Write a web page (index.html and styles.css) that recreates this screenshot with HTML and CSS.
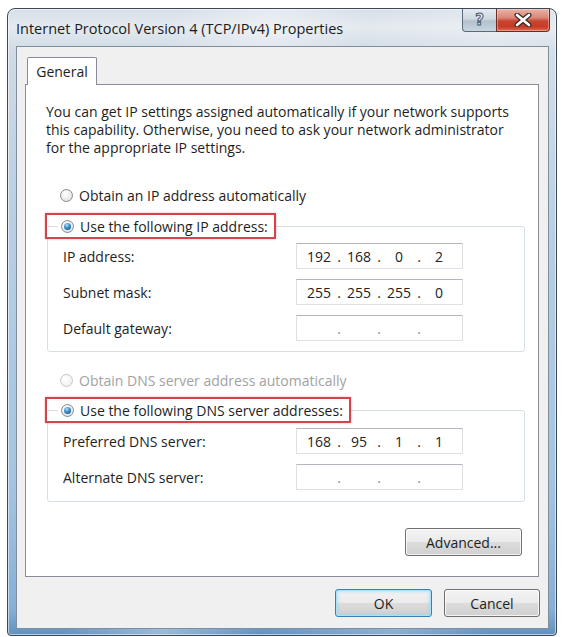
FILE: index.html
```html
<!DOCTYPE html>
<html lang="en">
<head>
<meta charset="utf-8">
<title>Internet Protocol Version 4 (TCP/IPv4) Properties</title>
<link rel="stylesheet" href="styles.css">
</head>
<body>
<div class="window">
  <div class="titlebar">
    <span class="title">Internet Protocol Version 4 (TCP/IPv4) Properties</span>
    <div class="caption-btns">
      <span class="cbtn help">?</span>
      <span class="cbtn close">
        <svg width="20" height="14" viewBox="0 0 20 14">
          <path d="M4 2 L16 12 M16 2 L4 12" stroke="#3a2a28" stroke-width="5" stroke-linecap="round"/>
          <path d="M4 2 L16 12 M16 2 L4 12" stroke="#ffffff" stroke-width="2.6" stroke-linecap="round"/>
        </svg>
      </span>
    </div>
  </div>
  <div class="client">
    <div class="tabs"><div class="tab">General</div></div>
    <div class="panel">
      <p class="intro">You can get IP settings assigned automatically if your network supports<br>this capability. Otherwise, you need to ask your network administrator<br>for the appropriate IP settings.</p>

      <div class="option"><span class="radio"></span>Obtain an IP address automatically</div>
      <div class="group group-ip">
        <div class="legend"><span class="radio on"></span>Use the following IP address:</div>
        <div class="fields">
          <span class="label">IP address:</span>
          <div class="ip"><span>192</span><i>.</i><span>168</span><i>.</i><span>0</span><i>.</i><span>2</span></div>
          <span class="label">Subnet mask:</span>
          <div class="ip"><span>255</span><i>.</i><span>255</span><i>.</i><span>255</span><i>.</i><span>0</span></div>
          <span class="label">Default gateway:</span>
          <div class="ip empty"><span></span><i>.</i><span></span><i>.</i><span></span><i>.</i><span></span></div>
        </div>
      </div>

      <div class="option disabled"><span class="radio"></span>Obtain DNS server address automatically</div>
      <div class="group group-dns">
        <div class="legend"><span class="radio on"></span>Use the following DNS server addresses:</div>
        <div class="fields">
          <span class="label">Preferred DNS server:</span>
          <div class="ip"><span>168</span><i>.</i><span>95</span><i>.</i><span>1</span><i>.</i><span>1</span></div>
          <span class="label">Alternate DNS server:</span>
          <div class="ip empty"><span></span><i>.</i><span></span><i>.</i><span></span><i>.</i><span></span></div>
        </div>
      </div>

      <button class="btn adv">Advanced...</button>
    </div>
    <div class="actions">
      <button class="btn ok">OK</button>
      <button class="btn cancel">Cancel</button>
    </div>
  </div>
</div>
</body>
</html>
```
FILE: styles.css
```css
* { box-sizing: border-box; }

html, body {
  margin: 0;
  padding: 0;
  background: #ffffff;
}

body {
  font-family: "Open Sans", "Noto Sans", "DejaVu Sans", sans-serif;
  font-size: 14px;
  color: #1e1e1e;
}

.window {
  margin: 8px 0 0 7px;
  width: 550px;
  height: 628px;
  border: 1px solid #3d4853;
  border-radius: 8px 8px 4px 4px;
  padding: 0 7px 6px 8px;
  display: flex;
  flex-direction: column;
  background:
    linear-gradient(100deg, rgba(255,255,255,0) 25%, rgba(255,255,255,.35) 40%, rgba(255,255,255,0) 55%, rgba(255,255,255,.25) 75%, rgba(255,255,255,0) 90%),
    linear-gradient(to bottom, #d6dfe8 0px, #e4eaef 18px, #d0dbe5 42px, #b9d0e4 200px, #a3c4e1 480px, #86b0d6 600px, #5f8fbe 628px);
  box-shadow: inset 0 0 0 1px rgba(255,255,255,.55);
}

.titlebar {
  height: 37px;
  display: flex;
  align-items: center;
  justify-content: space-between;
}

.title {
  font-size: 14.5px;
  color: #1b1b1b;
  margin-top: 1px;
}

.caption-btns {
  align-self: flex-start;
  display: flex;
  margin-right: -1px;
}

.cbtn {
  height: 23px;
  display: flex;
  align-items: center;
  justify-content: center;
  border: 1px solid #5d6b78;
  border-top: none;
}

.help {
  width: 34px;
  border-radius: 0 0 0 4px;
  border-right: none;
  background: linear-gradient(to bottom, #e4eaf0 0%, #cfd9e2 45%, #b3c1cd 55%, #c9d6e0 100%);
  font-family: "DejaVu Sans", sans-serif;
  font-weight: bold;
  font-size: 15px;
  color: #f4f6f8;
  -webkit-text-stroke: 1px #4a5560;
  padding-bottom: 1px;
}

.close {
  width: 54px;
  border-radius: 0 0 4px 0;
  border-color: #6d2a22;
  background: linear-gradient(to bottom, #eab2a8 0%, #db8676 40%, #c74631 55%, #c93a26 80%, #dc6a4e 100%);
  box-shadow: inset 0 0 0 1px rgba(255,255,255,.35);
}

.client {
  flex: 1;
  display: flex;
  flex-direction: column;
  background: #f0f0f0;
  border: 1px solid #7f8e9c;
  padding: 10px 9px 11px 8px;
}

.tabs {
  display: flex;
  padding-left: 2px;
}

.tab {
  position: relative;
  z-index: 1;
  width: 70px;
  height: 28px;
  margin-bottom: -1px;
  background: #ffffff;
  border: 1px solid #898c95;
  border-bottom: none;
  border-radius: 2px 2px 0 0;
  display: flex;
  align-items: center;
  justify-content: center;
  padding-bottom: 1px;
}

.panel {
  flex: 1;
  background: #ffffff;
  border: 1px solid #898c95;
  padding: 18px 13px 0 21px;
  display: flex;
  flex-direction: column;
}

.intro {
  margin: 0 0 0 -1px;
  line-height: 18px;
}

.option {
  display: flex;
  align-items: center;
  height: 18px;
  padding-left: 13px;
  margin-top: 29px;
}

.option.disabled {
  color: #a2a2a2;
  margin-top: 19px;
}

.radio {
  width: 13px;
  height: 13px;
  border-radius: 50%;
  border: 1px solid #8a8a8a;
  background: radial-gradient(circle at 40% 35%, #ffffff 0%, #f0f0f0 45%, #d4d4d4 100%);
  margin-right: 6px;
  flex: none;
  display: flex;
  align-items: center;
  justify-content: center;
}

.option.disabled .radio {
  border-color: #c6c6c6;
  background: radial-gradient(circle at 40% 35%, #ffffff, #ededed);
}

.radio.on::after {
  content: "";
  width: 7px;
  height: 7px;
  border-radius: 50%;
  background: radial-gradient(circle at 40% 30%, #a9e0fa 0%, #3b8ccc 45%, #0f3e6e 100%);
}

.group {
  border: 1px solid #d5dfe5;
  border-radius: 3px;
  display: flex;
  flex-direction: column;
  padding: 0 0 10px 15px;
}

.group-ip { margin-top: 22px; }
.group-dns { margin-top: 21px; padding-bottom: 11px; }

.legend {
  align-self: flex-start;
  display: flex;
  align-items: center;
  height: 26px;
  margin: -14px 0 0 -18px;
  border: 2px solid #d6434b;
  padding: 0 6px 0 14px;
  background:
    linear-gradient(#d5dfe5, #d5dfe5) no-repeat 1px 50% / 10px 1px,
    #ffffff;
  box-shadow: 0 0 2px rgba(214, 67, 75, .45);
}

.fields {
  margin-top: 4px;
  display: grid;
  grid-template-columns: 233px 167px;
  row-gap: 10px;
  align-items: center;
}

.group-dns .fields { margin-top: 5px; }

.ip {
  height: 26px;
  display: flex;
  align-items: center;
  padding-left: 6px;
  border: 1px solid #dde1e6;
  border-top-color: #b3b6bd;
  background: #ffffff;
  color: #222;
}

.ip span {
  width: 32px;
  text-align: center;
}

.ip i {
  font-style: normal;
  width: 8px;
  text-align: center;
}

.ip.empty i { color: #8a8a8a; }

.btn {
  font-family: inherit;
  font-size: 14px;
  color: #1e1e1e;
  height: 28px;
  border: 1px solid #707070;
  border-radius: 3px;
  background: linear-gradient(to bottom, #f3f3f3 0%, #ebebeb 48%, #dcdcdc 52%, #d0d0d0 100%);
  box-shadow: inset 0 0 0 1px rgba(255,255,255,.75);
  padding: 0;
}

.adv {
  align-self: flex-end;
  width: 117px;
  margin: 26px 3px 0 0;
}

.actions {
  display: flex;
  justify-content: flex-end;
  gap: 12px;
  margin: 12px -1px 0 0;
}

.ok {
  width: 97px;
  border-color: #3c7fb1;
  box-shadow: inset 0 0 0 1px #a9e2f8, inset 0 0 3px 2px rgba(140, 210, 240, .5);
}

.cancel { width: 96px; }
```
